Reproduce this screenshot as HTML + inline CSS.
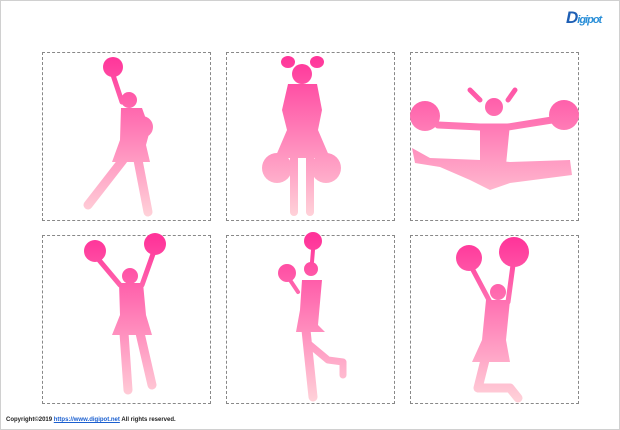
<!DOCTYPE html>
<html><head><meta charset="utf-8"><style>
html,body{margin:0;padding:0;background:#fff}
body{width:620px;height:430px;position:relative;overflow:hidden;font-family:"Liberation Sans",sans-serif}
.frame{position:absolute;left:0;top:0;width:618px;height:428px;border:1px solid #d0d0d0}
.box{position:absolute;width:169px;height:169px;border:1px dashed #888;box-sizing:border-box}
.foot{position:absolute;left:6px;top:417px;font-size:6px;font-weight:bold;color:#222}
.foot a{color:#1a5fd0;text-decoration:underline}
.logo{position:absolute;left:566px;top:8px;font:bold italic 17px "Liberation Sans",sans-serif;color:#1e5fb4;letter-spacing:-1px}
.logo small{font-size:11px;color:#2a8fd8}
</style></head><body>
<div class="frame"></div>
<div class="logo">D<small>igipot</small></div>
<div class="box" style="left:42px;top:52px"></div>
<div class="box" style="left:226px;top:52px"></div>
<div class="box" style="left:410px;top:52px"></div>
<div class="box" style="left:42px;top:235px"></div>
<div class="box" style="left:226px;top:235px"></div>
<div class="box" style="left:410px;top:235px"></div>
<svg width="620" height="430" style="position:absolute;left:0;top:0">
<defs>
<linearGradient id="g1" gradientUnits="userSpaceOnUse" x1="0" y1="55" x2="0" y2="215"><stop offset="0" stop-color="#ff3399"/><stop offset="1" stop-color="#ffd0d8"/></linearGradient>
<linearGradient id="g2" gradientUnits="userSpaceOnUse" x1="0" y1="237" x2="0" y2="400"><stop offset="0" stop-color="#ff3399"/><stop offset="1" stop-color="#ffd0d8"/></linearGradient>
</defs>
<g fill="url(#g1)" stroke="url(#g1)" stroke-linecap="round" stroke-linejoin="round">
<!-- fig1 -->
<circle cx="113" cy="67" r="10" stroke="none"/>
<path d="M113 75 L122 102" stroke-width="5" fill="none"/>
<circle cx="129" cy="100" r="8" stroke="none"/>
<path d="M121 108 L142 108 L150 130 L146 145 L150 162 L112 162 L120 140 Z" stroke="none"/>
<circle cx="142" cy="127" r="11" stroke="none"/>
<path d="M123 160 L88 205" stroke-width="9" fill="none"/>
<path d="M138 160 L148 212" stroke-width="9" fill="none"/>
<!-- fig2 -->
<circle cx="302" cy="74" r="10" stroke="none"/>
<ellipse cx="288" cy="62" rx="7" ry="6" stroke="none"/>
<ellipse cx="317" cy="62" rx="7" ry="6" stroke="none"/>
<path d="M288 84 L317 84 L322 110 L318 130 L330 158 L275 158 L287 130 L282 110 Z" stroke="none"/>
<circle cx="277" cy="168" r="15" stroke="none"/>
<circle cx="326" cy="168" r="15" stroke="none"/>
<path d="M294 158 L294 212 M310 158 L310 212" stroke-width="8" fill="none"/>
<!-- fig3 -->
<circle cx="425" cy="116" r="15" stroke="none"/>
<circle cx="564" cy="115" r="15" stroke="none"/>
<circle cx="494" cy="107" r="9" stroke="none"/>
<path d="M470 90 L480 100 M515 90 L508 100" stroke-width="5" fill="none"/>
<path d="M438 125 L480 127 L508 127 L552 120" stroke-width="7" fill="none"/>
<path d="M480 124 L510 124 L506 165 L480 165 Z" stroke="none"/>
<path d="M412 148 L430 158 L480 160 L510 162 L570 160 L572 175 L510 183 L490 190 L470 180 L440 167 L415 163 Z" stroke="none"/>
</g>
<g fill="url(#g2)" stroke="url(#g2)" stroke-linecap="round" stroke-linejoin="round">
<!-- fig4 -->
<circle cx="95" cy="251" r="11" stroke="none"/>
<circle cx="155" cy="244" r="11" stroke="none"/>
<path d="M99 260 L120 285 M153 254 L142 285" stroke-width="5" fill="none"/>
<circle cx="130" cy="276" r="8" stroke="none"/>
<path d="M119 283 L143 283 L146 315 L152 335 L112 335 L120 315 Z" stroke="none"/>
<path d="M124 333 L128 390 M140 333 L152 385" stroke-width="9" fill="none"/>
<!-- fig5 -->
<circle cx="313" cy="241" r="9" stroke="none"/>
<circle cx="287" cy="273" r="9" stroke="none"/>
<path d="M313 250 L312 262 M290 280 L298 292" stroke-width="4" fill="none"/>
<circle cx="311" cy="269" r="7" stroke="none"/>
<path d="M302 280 L322 280 L318 325 L325 332 L296 332 L300 310 Z" stroke="none"/>
<path d="M306 330 L313 397" stroke-width="9" fill="none"/>
<path d="M310 345 L328 360 L343 362 L343 375" stroke-width="7" fill="none"/>
<!-- fig6 -->
<circle cx="469" cy="258" r="13" stroke="none"/>
<circle cx="514" cy="252" r="15" stroke="none"/>
<path d="M473 270 L490 302 M513 265 L508 302" stroke-width="5" fill="none"/>
<circle cx="498" cy="292" r="8" stroke="none"/>
<path d="M486 300 L510 300 L506 340 L510 362 L472 362 L482 340 Z" stroke="none"/>
<path d="M485 360 L478 388 L510 388 L518 398" stroke-width="9" fill="none"/>
</g>
</svg>
<div class="foot">Copyright©2019 <a>https://www.digipot.net</a> All rights reserved.</div>
</body></html>
